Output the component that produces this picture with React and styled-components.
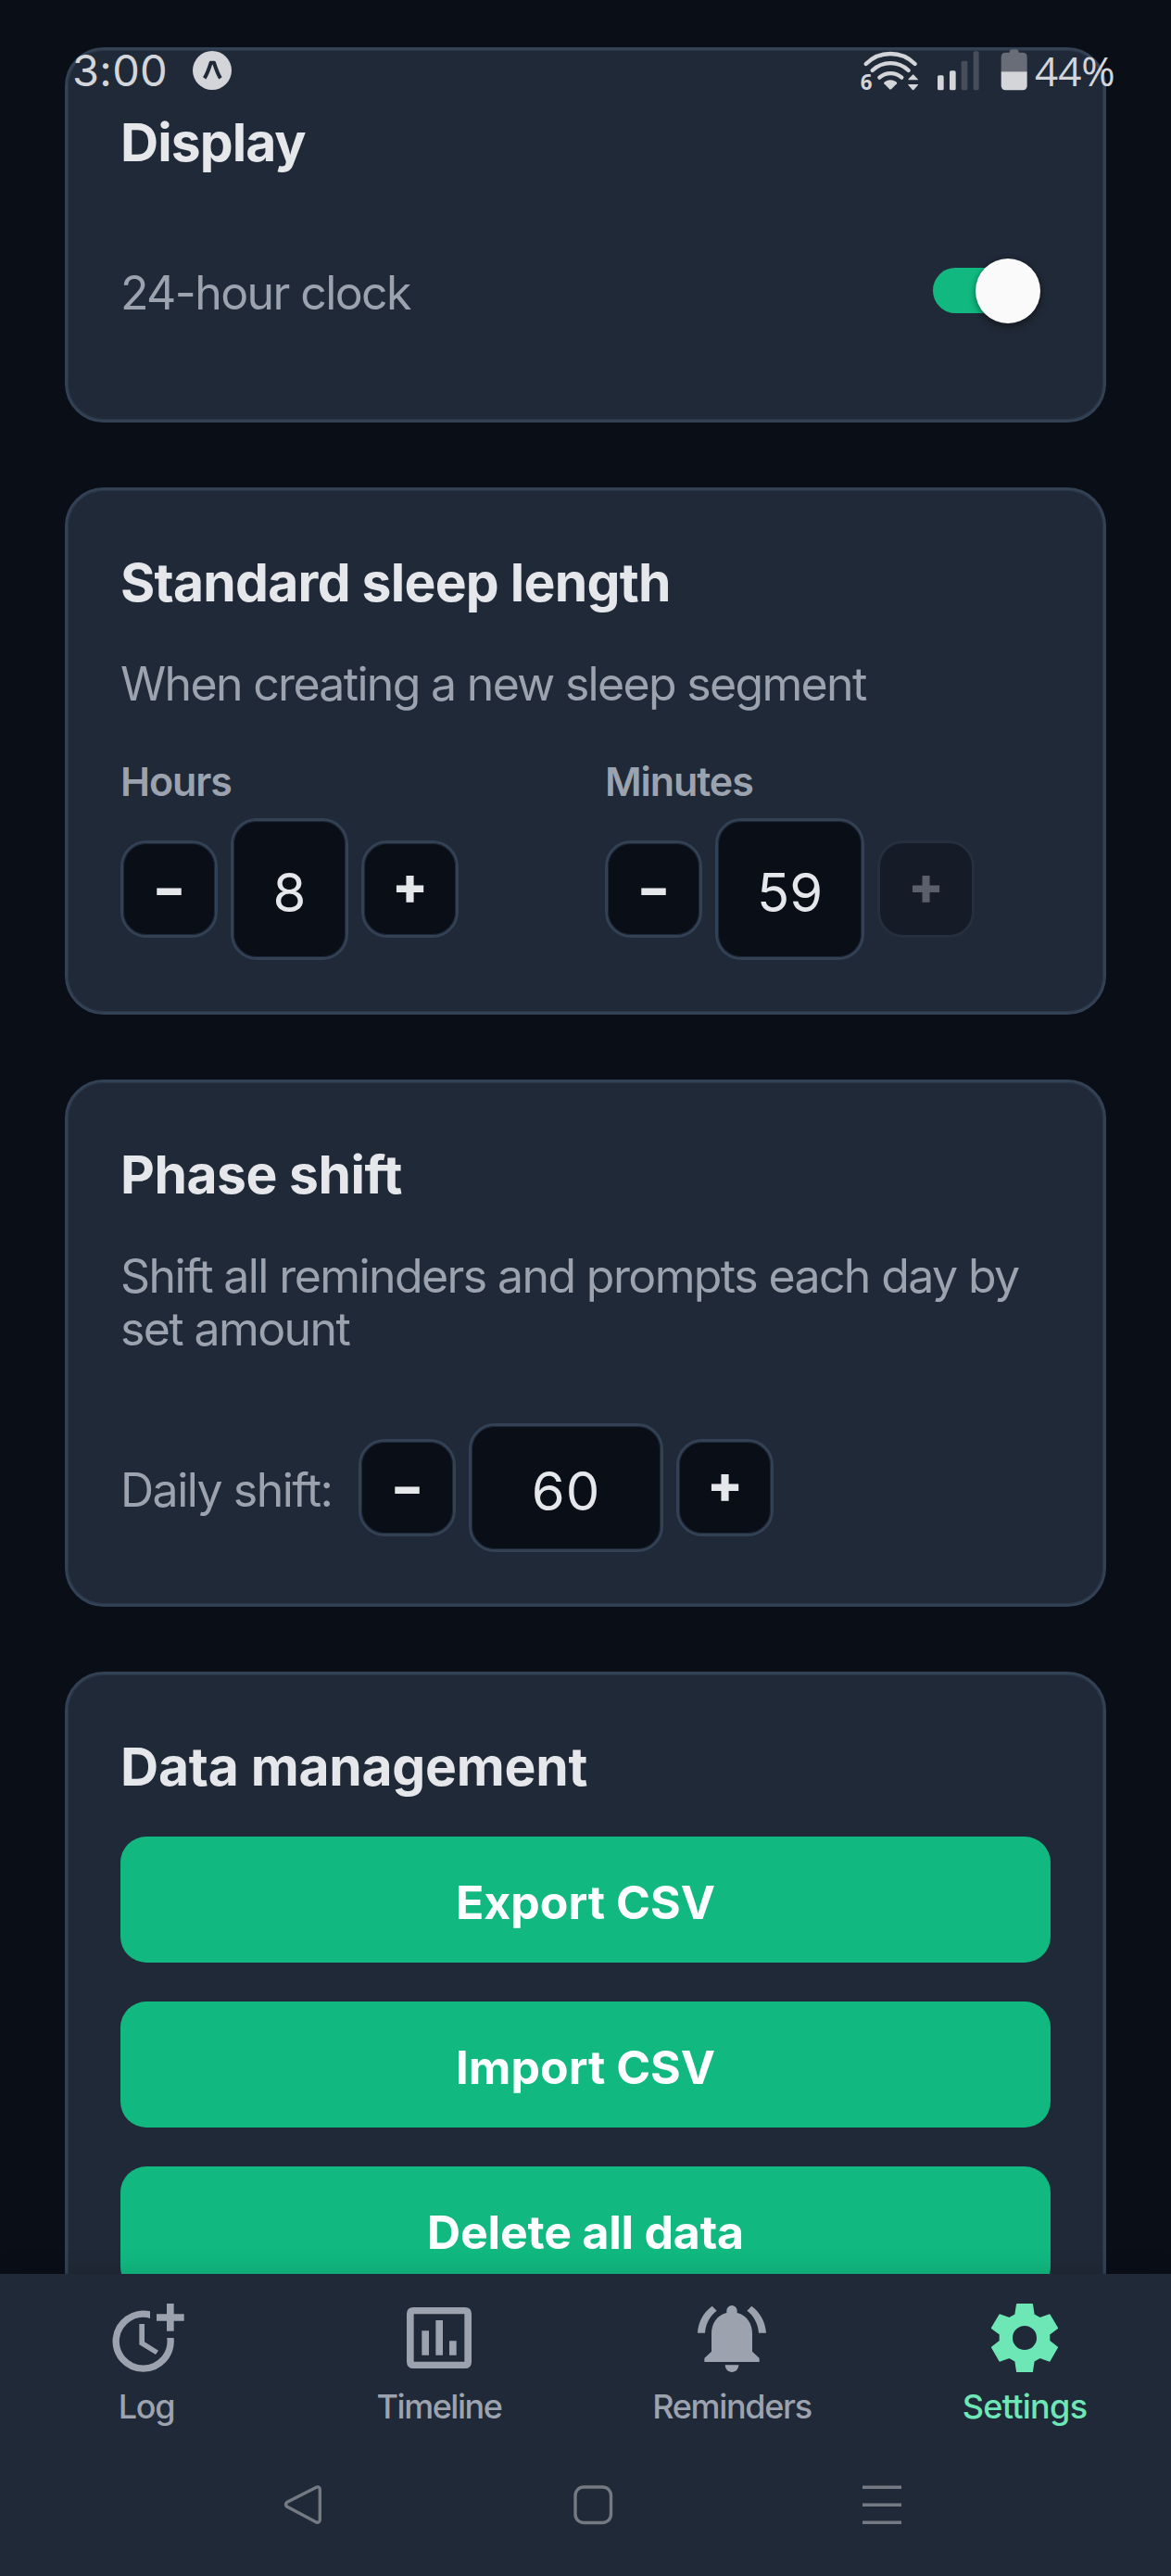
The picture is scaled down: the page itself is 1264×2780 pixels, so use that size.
import React from 'react';
import styled, { createGlobalStyle } from 'styled-components';

const color = {
  page: '#0a0e17',
  surface: '#202937',
  border: '#334155',
  borderInner: 'rgba(51, 65, 85, 0.5)',
  text: '#e5e7eb',
  muted: '#9ca3af',
  green: '#11b981',
  mint: '#6ee7b7',
  status: '#d3d5d9',
  statusDim: '#474e5a',
  nav: '#747982',
};

const GlobalStyle = createGlobalStyle`
  *, *::before, *::after { box-sizing: border-box; }
  body {
    margin: 0;
    background: ${color.page};
    font-family: Inter, "Liberation Sans", sans-serif;
  }
  button { font-family: inherit; }
`;

const Screen = styled.div`
  position: relative;
  display: flex;
  flex-direction: column;
  width: 1264px;
  height: 2780px;
  overflow: hidden;
  background: ${color.page};
`;

/* ---------- system status bar ---------- */

const StatusBar = styled.header`
  position: absolute;
  inset: 0 0 auto 0;
  z-index: 2;
  display: flex;
  justify-content: space-between;
  align-items: flex-start;
  padding: 47px 59px 0 78px;
  color: ${color.status};
`;

const StatusGroup = styled.div`
  display: flex;
  align-items: flex-start;
`;

const Clock = styled.span`
  width: 130px;
  font-size: 47px;
  font-weight: 400;
  line-height: 58px;
  letter-spacing: 0.3px;
  white-space: nowrap;
`;

const AppBadge = styled.svg`
  width: 42px;
  height: 42px;
  margin-top: 8px;
`;

const StatusIcons = styled.svg`
  width: 183px;
  height: 47px;
  margin: 5px 6px 0 0;
  overflow: visible;
`;

const BatteryLevel = styled.span`
  width: 88px;
  font-family: "Open Sans", sans-serif;
  font-size: 44px;
  font-weight: 400;
  line-height: 58px;
  white-space: nowrap;
`;

/* ---------- cards ---------- */

const Content = styled.main`
  display: flex;
  flex-direction: column;
  flex: 0 0 2454px;
  gap: 70px;
  padding: 51px 70px 0;
  overflow: hidden;
`;

const Card = styled.section`
  display: flex;
  flex-direction: column;
  flex: none;
  min-height: ${(p) => p.$height || 569}px;
  padding: 57px 57px 56px;
  border: 3px solid ${color.border};
  border-radius: 42px;
  background: ${color.surface};
  box-shadow: inset 0 0 0 1px ${color.borderInner};
`;

const CardTitle = styled.h2`
  margin: 0;
  padding-top: 2px;
  color: ${color.text};
  font-size: 57px;
  font-weight: 700;
  line-height: 82px;
  letter-spacing: ${(p) => p.$track || 0}px;
`;

const Description = styled.p`
  margin: 40px -30px 0 0;
  color: ${color.muted};
  font-size: 50px;
  font-weight: 400;
  line-height: 57px;
  letter-spacing: ${(p) => p.$track || 0}px;
`;

const ToggleRow = styled.label`
  display: flex;
  justify-content: space-between;
  align-items: center;
  height: 71px;
  margin-top: 83px;
  padding-right: 11px;
`;

const ToggleText = styled.span`
  padding-top: 5px;
  color: ${color.muted};
  font-size: 50px;
  font-weight: 400;
  line-height: 57px;
  letter-spacing: -1.6px;
`;

const ToggleTrack = styled.span`
  display: flex;
  justify-content: flex-end;
  align-items: center;
  width: 116px;
  height: 49px;
  border-radius: 25px;
  background: linear-gradient(90deg, ${color.green} 90px, transparent 90px);
`;

const ToggleThumb = styled.span`
  width: 70px;
  height: 70px;
  flex: none;
  border-radius: 50%;
  background: #fafafa;
  box-shadow: 0 4px 9px rgba(0, 0, 0, 0.32), 0 0 5px rgba(0, 0, 0, 0.2);
`;

const DurationFields = styled.div`
  display: grid;
  grid-template-columns: 1fr 1fr;
  column-gap: 42px;
  margin-top: 51px;
`;

const Field = styled.div`
  display: flex;
  flex-direction: column;
  gap: 15px;
`;

const FieldLabel = styled.span`
  color: ${color.muted};
  font-size: 43px;
  font-weight: 600;
  line-height: 50px;
  letter-spacing: -1.1px;
`;

const Stepper = styled.div`
  display: flex;
  align-items: center;
  gap: 14px;
`;

const StepButton = styled.button`
  display: flex;
  justify-content: center;
  align-items: center;
  flex: none;
  width: 105px;
  height: 105px;
  padding: 0 0 2px;
  border: 3px solid ${color.border};
  border-radius: 28px;
  background: ${color.page};
  box-shadow: inset 0 0 0 1px ${color.borderInner};
  color: ${color.text};
  font-size: 57px;
  font-weight: 800;
  line-height: 70px;

  &:disabled {
    border-color: #252f3e;
    background: #151b27;
    box-shadow: none;
    color: #5a5f6b;
  }
`;

const MinusSign = styled.span`
  transform: scaleX(1.38);
`;

const PlusSign = styled.span`
  padding-bottom: 6px;
`;

const StepValue = styled.output`
  display: flex;
  justify-content: center;
  align-items: center;
  flex: none;
  width: ${(p) => p.$width}px;
  height: ${(p) => p.$height}px;
  padding-top: 6px;
  border: 3px solid ${color.border};
  border-radius: 28px;
  background: ${color.page};
  box-shadow: inset 0 0 0 1px ${color.borderInner};
  color: ${color.text};
  font-size: 58px;
  font-weight: 400;
  line-height: 70px;
  letter-spacing: ${(p) => p.$track || 0}px;
`;

const ShiftRow = styled.div`
  display: flex;
  align-items: center;
  margin-top: 73px;
`;

const ShiftLabel = styled.span`
  width: 257px;
  padding-top: 5px;
  color: ${color.muted};
  font-size: 50px;
  font-weight: 400;
  line-height: 57px;
  letter-spacing: -1.5px;
  white-space: nowrap;
`;

const Actions = styled.div`
  display: flex;
  flex-direction: column;
  gap: 42px;
  margin-top: 34px;
`;

const ActionButton = styled.button`
  display: flex;
  justify-content: center;
  align-items: center;
  height: 136px;
  padding: 5px 0 0;
  border: 0;
  border-radius: 28px;
  background: ${color.green};
  color: #fff;
  font-size: 50px;
  font-weight: 700;
  line-height: 60px;
  letter-spacing: ${(p) => p.$track || 0}px;
`;

/* ---------- bottom bars ---------- */

const Bottom = styled.footer`
  position: relative;
  display: flex;
  flex-direction: column;
  flex: 1;
  background: ${color.surface};
  box-shadow: 0 -2px 24px rgba(0, 0, 0, 0.14);
`;

const Tabs = styled.nav`
  display: grid;
  grid-template-columns: repeat(4, 1fr);
  padding-top: 25px;
`;

const Tab = styled.a`
  display: flex;
  flex-direction: column;
  align-items: center;
  gap: 8px;
  color: ${(p) => (p.$active ? color.mint : color.muted)};
`;

const TabIcon = styled.svg`
  width: 88px;
  height: 88px;
  fill: currentColor;
`;

const TabLabel = styled.span`
  font-size: 36px;
  font-weight: 500;
  line-height: 44px;
  letter-spacing: ${(p) => p.$track || 0}px;
`;

const SystemNav = styled.div`
  display: flex;
  justify-content: space-between;
  margin-top: 62px;
  padding: 0 290px 0 305px;
`;

const NavIcon = styled.svg`
  width: 44px;
  height: 44px;
  fill: none;
  stroke: ${color.nav};
  stroke-width: 3.4;
  stroke-linejoin: round;
`;

function StatusGlyphs() {
  return (
    <StatusIcons viewBox="85 65 549 141" fill={color.status}>
      <text x="87" y="200" fontFamily="Open Sans, sans-serif" fontWeight="700" fontSize="67">6</text>
      <g fill="none" stroke={color.status} strokeWidth="13" strokeLinecap="round">
        <path d="M105 116A112 112 0 0 1 264 116" />
        <path d="M126 137A84 84 0 0 1 243 137" />
        <path d="M149 160A54 54 0 0 1 221 160" />
      </g>
      <path d="M164 180Q162 177 166 174Q184 161 203 174Q207 177 205 180L188 197Q184 200 181 197Z" />
      <path d="M242 166Q242 165 256 151Q258 149 260 151L274 166Q275 168 273 168H243ZM242 184Q241 182 243 182H273Q275 182 274 184L260 200Q258 202 256 200Z" />
      <rect x="337" y="153" width="20" height="48" rx="5" />
      <rect x="376" y="138" width="20" height="63" rx="5" />
      <rect x="414" y="106" width="20" height="95" rx="5" fill={color.statusDim} />
      <rect x="453" y="75" width="18" height="126" rx="5" fill={color.statusDim} />
      <path d="M543 141V94Q543 79 558 79H570Q570 69 580 69H590Q600 69 600 79H612Q627 79 627 94V141Z" fill="#686d77" />
      <path d="M543 141H627V186Q627 201 612 201H558Q543 201 543 186Z" />
    </StatusIcons>
  );
}

function LogIcon() {
  return (
    <TabIcon viewBox="12 27 264 264">
      <path d="M156 73A99.5 99.5 0 1 0 232.9 159H210.7A77.5 77.5 0 1 1 156 95.7Z" />
      <path d="M121 114H138V172L183 200L174 213L121 181Z" />
      <path d="M210 48H233V82H266V104H233V137H210V104H177V82H210Z" />
    </TabIcon>
  );
}

function TimelineIcon() {
  return (
    <TabIcon viewBox="960 27 264 264">
      <path
        fillRule="evenodd"
        d="M1009 60H1175Q1197 60 1197 82V236Q1197 258 1175 258H1009Q987 258 987 236V82Q987 60 1009 60ZM1010 82V236H1174V82Z"
      />
      <path d="M1036 136H1059V215H1036ZM1081 102H1104V215H1081ZM1125 169H1148V215H1125Z" />
    </TabIcon>
  );
}

function BellIcon() {
  return (
    <TabIcon viewBox="48 27 264 264">
      <path d="M116 56L131 71C108 88 95 115 93 143H69C71 108 88 77 116 56Z" />
      <path d="M244 56L229 71C252 88 265 115 267 143H291C289 108 272 77 244 56Z" />
      <path d="M180 54A17 17 0 0 1 197 71V78C230 86 246 115 246 145V203L269 225V237H91V225L114 203V145C114 115 130 86 163 78V71A17 17 0 0 1 180 54Z" />
      <path d="M158 247H202C202 260 192 270 180 270S158 260 158 247Z" />
    </TabIcon>
  );
}

function GearIcon() {
  return (
    <TabIcon viewBox="996 27 264 264">
      <path
        fillRule="evenodd"
        stroke="currentColor"
        strokeWidth="6"
        strokeLinejoin="round"
        d="M1104 51H1152L1157 84L1178 96L1208 85L1233 127L1207 147V170L1233 190L1208 233L1178 222L1157 234L1152 267H1104L1099 234L1078 222L1048 233L1023 190L1049 170V147L1023 127L1048 85L1078 96L1099 84ZM1128 117A42 42 0 1 0 1128 201A42 42 0 1 0 1128 117Z"
      />
    </TabIcon>
  );
}

const tabs = [
  { label: 'Log', Icon: LogIcon, track: -1.3 },
  { label: 'Timeline', Icon: TimelineIcon, track: -1.45 },
  { label: 'Reminders', Icon: BellIcon, track: -1.3 },
  { label: 'Settings', Icon: GearIcon, track: -0.7, active: true },
];

function NumberStepper({ value, width, height = 153, track, atMax }) {
  return (
    <Stepper>
      <StepButton><MinusSign>-</MinusSign></StepButton>
      <StepValue $width={width} $height={height} $track={track}>{value}</StepValue>
      <StepButton disabled={atMax}><PlusSign>+</PlusSign></StepButton>
    </Stepper>
  );
}

export default function App() {
  return (
    <Screen>
      <GlobalStyle />
      <StatusBar>
        <StatusGroup>
          <Clock>3:00</Clock>
          <AppBadge viewBox="504 75 126 126">
            <circle cx="567" cy="138" r="63" fill={color.status} />
            <path
              d="M542 163C551 150 558 129 563 113H573C578 129 585 150 594 163"
              fill="none"
              stroke={color.surface}
              strokeWidth="12"
              strokeLinejoin="round"
            />
          </AppBadge>
        </StatusGroup>
        <StatusGroup>
          <StatusGlyphs />
          <BatteryLevel>44%</BatteryLevel>
        </StatusGroup>
      </StatusBar>

      <Content>
        <Card $height={405}>
          <CardTitle $track={-0.95}>Display</CardTitle>
          <ToggleRow>
            <ToggleText>24-hour clock</ToggleText>
            <ToggleTrack>
              <ToggleThumb />
            </ToggleTrack>
          </ToggleRow>
        </Card>

        <Card>
          <CardTitle $track={-0.75}>Standard sleep length</CardTitle>
          <Description $track={-1.68}>When creating a new sleep segment</Description>
          <DurationFields>
            <Field>
              <FieldLabel>Hours</FieldLabel>
              <NumberStepper value="8" width={127} />
            </Field>
            <Field>
              <FieldLabel>Minutes</FieldLabel>
              <NumberStepper value="59" width={161} atMax />
            </Field>
          </DurationFields>
        </Card>

        <Card>
          <CardTitle $track={-0.47}>Phase shift</CardTitle>
          <Description $track={-1.6}>
            Shift all reminders and prompts each day by set amount
          </Description>
          <ShiftRow>
            <ShiftLabel>Daily shift:</ShiftLabel>
            <NumberStepper value="60" width={210} height={139} track={1} />
          </ShiftRow>
        </Card>

        <Card $height={900}>
          <CardTitle $track={-0.26}>Data management</CardTitle>
          <Actions>
            <ActionButton>Export CSV</ActionButton>
            <ActionButton>Import CSV</ActionButton>
            <ActionButton $track={-0.2}>Delete all data</ActionButton>
          </Actions>
        </Card>
      </Content>

      <Bottom>
        <Tabs>
          {tabs.map(({ label, Icon, track, active }) => (
            <Tab key={label} $active={active}>
              <Icon />
              <TabLabel $track={track}>{label}</TabLabel>
            </Tab>
          ))}
        </Tabs>
        <SystemNav>
          <NavIcon viewBox="0 0 44 44">
            <path d="M36.5 3.2L4.5 19.6Q2.6 22 4.5 24L36.5 41Q40.3 42 40.3 38V6Q40.3 2 36.5 3.2Z" />
          </NavIcon>
          <NavIcon viewBox="0 0 44 44">
            <rect x="3" y="3" width="38.5" height="38.5" rx="9" />
          </NavIcon>
          <NavIcon viewBox="0 0 44 44">
            <path d="M1 3.2H43M1 22.2H43M1 41.2H43" />
          </NavIcon>
        </SystemNav>
      </Bottom>
    </Screen>
  );
}
